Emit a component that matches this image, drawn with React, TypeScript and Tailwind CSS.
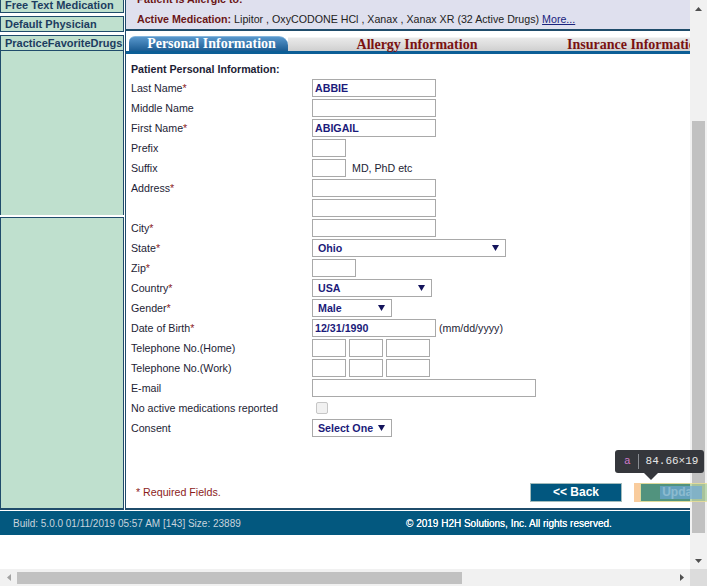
import React from "react";

const Arrow = () => (
  <svg width="7" height="6" viewBox="0 0 7 6" className="shrink-0">
    <path d="M0 0h7L3.5 6z" fill="#14145c" />
  </svg>
);

function TextBox({ w, value }: { w: string; value?: string }) {
  return (
    <div
      className={`${w} h-[18px] border border-[#a9a9a9] bg-white pl-[2px] text-[10.67px] font-bold leading-[16px] text-[#1b1b7a]`}
    >
      {value}
    </div>
  );
}

function SelectBox({ w, value }: { w: string; value: string }) {
  return (
    <div
      className={`${w} flex h-[18px] items-center justify-between border border-[#a9a9a9] bg-white pl-[5px] pr-[6px] text-[10.67px] font-bold text-[#1b1b7a]`}
    >
      <span>{value}</span>
      <Arrow />
    </div>
  );
}

function Row({
  label,
  req,
  children,
}: {
  label?: string;
  req?: boolean;
  children?: React.ReactNode;
}) {
  return (
    <div className="flex h-[20px] items-center">
      <div className="w-[181px] shrink-0 text-[10.67px] text-[#1d1d35]">
        {label}
        {req && <span className="text-[#8b1c1c]">*</span>}
      </div>
      <div className="flex items-center gap-[3px]">{children}</div>
    </div>
  );
}

const SideItem = ({ label }: { label: string }) => (
  <div className="flex h-[16px] items-center border border-[#1f4c6b] bg-[#bfe0ce] pl-[4px] text-[11px] font-bold leading-none text-[#1c3d60]">
    {label}
  </div>
);

function Sidebar() {
  return (
    <div className="flex w-[124px] shrink-0 flex-col pt-[9px]">
      <div className="flex flex-col gap-[3px]">
        <SideItem label="Free Text Medication" />
        <SideItem label="Default Physician" />
        <SideItem label="PracticeFavoriteDrugs" />
      </div>
      <div className="h-[164px] border-x border-[#1f4c6b] bg-[#bfe0ce]" />
      <div className="mt-[2px] h-[293px] border border-b-2 border-[#1f4c6b] bg-[#bfe0ce]" />
    </div>
  );
}

function Header() {
  return (
    <div className="border-b-2 border-[#1f4c6b] bg-[#dfe0ee] pl-[11px] text-[10.67px]">
      <div className="flex h-[21px] items-center font-bold text-[#6b1616]">
        Patient is Allergic to:
      </div>
      <div className="flex h-[20px] items-center whitespace-nowrap text-[#222]">
        <span className="font-bold text-[#6b1616]">Active Medication:</span>
        &nbsp;Lipitor , OxyCODONE HCl , Xanax , Xanax XR (32 Active Drugs)&nbsp;
        <span className="text-[#1a237e] underline">More...</span>
      </div>
    </div>
  );
}

function Tabs() {
  return (
    <div className="mt-[4px] font-['Liberation_Serif','Times_New_Roman',serif] text-[14px] font-bold">
      <div className="flex h-[16px] items-end pl-[3px]">
        <div className="flex h-[15px] w-[159px] items-center justify-center rounded-tl-[6px] rounded-tr-[9px] border-t border-[#86b6dd] bg-linear-to-b from-[#5797cc] to-[#1a5c93] pb-[1px] pl-[6px] text-white">
          Personal Information
        </div>
        <div className="flex h-[14px] flex-1 border-t border-[#f4f4f4] bg-linear-to-b from-[#e9e9e9] via-[#dddddd] to-[#cfcfcf] text-[#7a1212]">
          <div className="flex w-[258px] items-center justify-center pb-[1px]">
            Allergy Information
          </div>
          <div className="flex items-center whitespace-nowrap pb-[1px] pl-[21px]">
            Insurance Information
          </div>
        </div>
      </div>
      <div className="h-[3px] bg-[#0c5e96]" />
    </div>
  );
}

function FormPanel() {
  return (
    <div className="border-b-2 border-[#1f4c6b] pb-[6px] pl-[5px] pt-[5px]">
      <div className="flex h-[19px] items-center text-[10.67px] font-bold text-[#1d1d35]">
        Patient Personal Information:
      </div>
      <Row label="Last Name" req>
        <TextBox w="w-[124px]" value="ABBIE" />
      </Row>
      <Row label="Middle Name">
        <TextBox w="w-[124px]" />
      </Row>
      <Row label="First Name" req>
        <TextBox w="w-[124px]" value="ABIGAIL" />
      </Row>
      <Row label="Prefix">
        <TextBox w="w-[34px]" />
      </Row>
      <Row label="Suffix">
        <TextBox w="w-[34px]" />
        <span className="ml-[3px] text-[10.67px] text-[#1d1d35]">MD, PhD etc</span>
      </Row>
      <Row label="Address" req>
        <TextBox w="w-[124px]" />
      </Row>
      <Row>
        <TextBox w="w-[124px]" />
      </Row>
      <Row label="City" req>
        <TextBox w="w-[124px]" />
      </Row>
      <Row label="State" req>
        <SelectBox w="w-[194px]" value="Ohio" />
      </Row>
      <Row label="Zip" req>
        <TextBox w="w-[44px]" />
      </Row>
      <Row label="Country" req>
        <SelectBox w="w-[120px]" value="USA" />
      </Row>
      <Row label="Gender" req>
        <SelectBox w="w-[80px]" value="Male" />
      </Row>
      <Row label="Date of Birth" req>
        <TextBox w="w-[124px]" value="12/31/1990" />
        <span className="text-[10.67px] text-[#1d1d35]">(mm/dd/yyyy)</span>
      </Row>
      <Row label="Telephone No.(Home)">
        <TextBox w="w-[34px]" />
        <TextBox w="w-[34px]" />
        <TextBox w="w-[44px]" />
      </Row>
      <Row label="Telephone No.(Work)">
        <TextBox w="w-[34px]" />
        <TextBox w="w-[34px]" />
        <TextBox w="w-[44px]" />
      </Row>
      <Row label="E-mail">
        <TextBox w="w-[224px]" />
      </Row>
      <Row label="No active medications reported">
        <span className="ml-[4px] h-[12px] w-[12px] rounded-[2px] border border-[#c6c6c6] bg-[#f1f1f1]" />
      </Row>
      <Row label="Consent">
        <SelectBox w="w-[80px]" value="Select One" />
      </Row>

      <div className="mt-[44px] flex h-[20px] items-center">
        <div className="w-[399px] shrink-0 pl-[5px] text-[10.67px] text-[#8b1c1c]">
          * Required Fields.
        </div>
        <button className="flex h-[19px] w-[92px] items-center justify-center border border-[#a3bcbc] bg-[#02577f] text-[12px] font-bold text-white">
          &lt;&lt; Back
        </button>
        <button className="ml-[18px] flex h-[19px] w-[85px] items-center justify-center border border-[#a3bcbc] bg-[#02577f] text-[12px] font-bold text-white">
          Update
        </button>
      </div>
    </div>
  );
}

function Footer() {
  return (
    <div className="mt-[1px] flex h-[24px] items-center bg-[#03587f] text-[10px]">
      <div className="w-[406px] shrink-0 pl-[13px] text-[#c9d4dd]">
        Build: 5.0.0 01/11/2019 05:57 AM [143] Size: 23889
      </div>
      <div className="text-white [text-shadow:0_0_0.4px_#fff]">
        © 2019 H2H Solutions, Inc. All rights reserved.
      </div>
    </div>
  );
}

function VScrollbar() {
  return (
    <div className="flex w-[17px] shrink-0 flex-col bg-[#f1f1f1]">
      <div className="flex h-[17px] items-center justify-center">
        <svg width="7" height="4" viewBox="0 0 7 4">
          <path d="M0 4L3.5 0 7 4z" fill="#505050" />
        </svg>
      </div>
      <div className="flex-1 pl-[2px] pt-[104px]">
        <div className="h-[412px] w-[13px] bg-[#c1c1c1]" />
      </div>
      <div className="flex h-[17px] items-center justify-center">
        <svg width="7" height="4" viewBox="0 0 7 4">
          <path d="M0 0h7L3.5 4z" fill="#505050" />
        </svg>
      </div>
    </div>
  );
}

function HScrollbar() {
  return (
    <div className="flex h-[17px] shrink-0">
      <div className="flex flex-1 items-center bg-[#f1f1f1]">
        <div className="flex w-[17px] items-center justify-center">
          <svg width="4" height="7" viewBox="0 0 4 7">
            <path d="M4 0v7L0 3.5z" fill="#a3a3a3" />
          </svg>
        </div>
        <div className="flex-1">
          <div className="h-[12px] w-[445px] bg-[#c1c1c1]" />
        </div>
        <div className="flex w-[17px] items-center justify-center">
          <svg width="4" height="7" viewBox="0 0 4 7">
            <path d="M0 0v7L4 3.5z" fill="#505050" />
          </svg>
        </div>
      </div>
      <div className="w-[17px] bg-[#dcdcdc]" />
    </div>
  );
}

export default function App() {
  return (
    <div className="relative flex h-[586px] w-[707px] flex-col overflow-hidden bg-white font-['Liberation_Sans',Arial,sans-serif]">
      <div className="flex min-h-0 flex-1">
        <div className="min-w-0 flex-1 overflow-hidden">
          <div className="-mt-[12px] w-[1017px]">
            <div className="flex">
              <Sidebar />
              <div className="ml-[1px] flex-1 border-l border-[#1f4c6b]">
                <Header />
                <Tabs />
                <FormPanel />
              </div>
            </div>
            <Footer />
          </div>
        </div>
        <VScrollbar />
      </div>
      <HScrollbar />

      {/* devtools element highlight over the Update link */}
      <div className="pointer-events-none absolute left-[634px] top-[483px] h-[19px] w-[6px] bg-[rgba(246,178,107,0.66)]" />
      <div className="pointer-events-none absolute left-[640px] top-[483px] h-[19px] w-[85px] border border-[rgba(255,229,153,0.66)] bg-[rgba(147,196,125,0.55)]" />
      <div className="pointer-events-none absolute left-[660px] top-[486px] h-[13px] w-[42px] bg-[rgba(111,168,220,0.66)]" />
      <div className="pointer-events-none absolute left-[615px] top-[450px] flex h-[23px] w-[89px] items-center rounded-[3px] bg-[#35373c] pl-[9px] font-['Liberation_Mono',monospace] text-[11px]">
        <span className="text-[#d07ac9]">a</span>
        <div className="ml-[7px] mr-[7px] h-[15px] w-[1px] shrink-0 bg-[#8a8d93]" />
        <span className="text-[#e6e6e6]">84.66×19</span>
        <div className="absolute left-[29px] top-[23px] h-0 w-0 border-x-[7px] border-t-[7px] border-x-transparent border-t-[#35373c]" />
      </div>
    </div>
  );
}
